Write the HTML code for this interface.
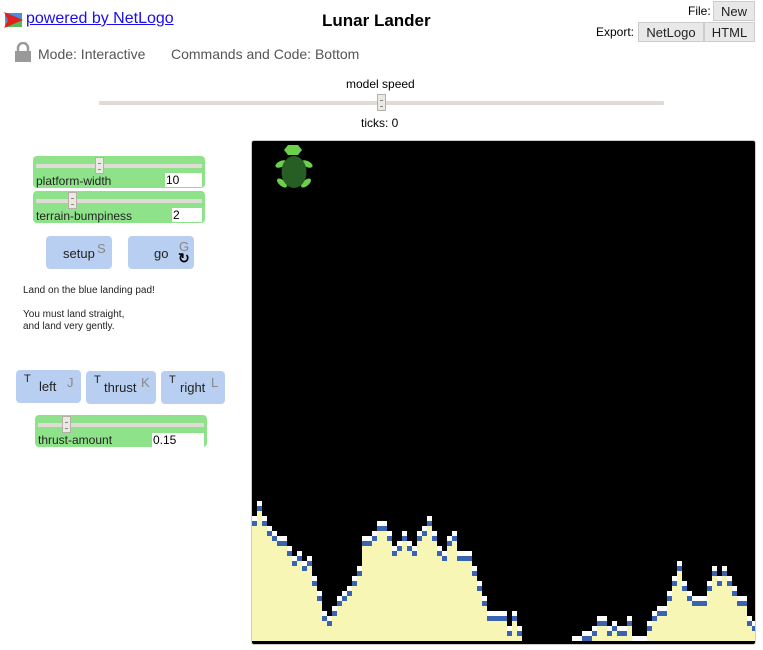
<!DOCTYPE html>
<html><head><meta charset="utf-8"><style>
body{margin:0;width:763px;height:650px;background:#fff;font-family:"Liberation Sans",Arial,sans-serif;position:relative;overflow:hidden}
.a{position:absolute}
.sl{position:absolute;background:#8ee38a;border-radius:4px}
.track{position:absolute;height:4px;background:#e0dcd5}
.thumb{position:absolute;width:9px;height:17px;background:#ece9e4;border:1px solid #b5b0a8;box-sizing:border-box}
.thumb:after{content:"";position:absolute;left:2px;top:5px;width:3px;height:5px;border-top:1px solid #888;border-bottom:1px solid #888}
.lbl{position:absolute;font-size:12px;color:#222}
.val{position:absolute;background:#fff;font-size:12px;color:#000;padding-left:1px;box-sizing:border-box}
.btn{position:absolute;background:#b9cff2;border-radius:4px;font-size:13px;color:#222}
.k{position:absolute;color:#888;font-size:13px}
.tb{position:absolute;background:#e8e8e8;border:1px solid #ccc;font-size:13px;text-align:center;box-sizing:border-box;line-height:19px;color:#222}
</style></head><body>
<svg class="a" style="left:4px;top:12px" width="20" height="16" viewBox="0 0 20 16"><rect x="1" y="1" width="17" height="14" fill="#4a8ee0"/><rect x="1" y="9" width="17" height="6" fill="#5cb85c"/><polygon points="0,0 19,8 0,16 4,8" fill="#e0201c"/></svg>
<div class="a" style="left:26px;top:10px;font-size:16px;color:#1a0dee;text-decoration:underline">powered by NetLogo</div>
<div class="a" style="left:322px;top:11px;font-size:17px;font-weight:bold">Lunar Lander</div>
<div class="a" style="left:688px;top:4px;font-size:12px">File:</div>
<div class="tb" style="left:713px;top:1px;width:42px;height:20px">New</div>
<div class="a" style="left:596px;top:25px;font-size:12px">Export:</div>
<div class="tb" style="left:638px;top:22px;width:66px;height:20px">NetLogo</div>
<div class="tb" style="left:704px;top:22px;width:51px;height:20px">HTML</div>
<svg class="a" style="left:14px;top:42px" width="18" height="20" viewBox="0 0 18 20"><path d="M4 9V6a5 5 0 0 1 10 0v3" fill="none" stroke="#999" stroke-width="2.5"/><rect x="1" y="9" width="16" height="11" fill="#999"/></svg>
<div class="a" style="left:38px;top:46px;font-size:14px;color:#555">Mode: Interactive</div>
<div class="a" style="left:171px;top:46px;font-size:14px;color:#555">Commands and Code: Bottom</div>
<div class="a" style="left:346px;top:77px;font-size:12px">model speed</div>
<div class="track" style="left:99px;top:101px;width:565px"></div>
<div class="thumb" style="left:377px;top:94px"></div>
<div class="a" style="left:361px;top:116px;font-size:12px">ticks: 0</div>

<div class="sl" style="left:33px;top:156px;width:172px;height:32px"></div>
<div class="track" style="left:36px;top:164px;width:166px"></div>
<div class="thumb" style="left:95px;top:157px"></div>
<div class="lbl" style="left:36px;top:174px">platform-width</div>
<div class="val" style="left:165px;top:173px;width:37px;height:14px">10</div>
<div class="sl" style="left:33px;top:191px;width:172px;height:32px"></div>
<div class="track" style="left:36px;top:199px;width:166px"></div>
<div class="thumb" style="left:68px;top:192px"></div>
<div class="lbl" style="left:36px;top:209px">terrain-bumpiness</div>
<div class="val" style="left:172px;top:208px;width:30px;height:14px">2</div>

<div class="btn" style="left:46px;top:236px;width:66px;height:33px"><span class="a" style="left:17px;top:10px">setup</span><span class="k" style="left:51px;top:5px">S</span></div>
<div class="btn" style="left:128px;top:236px;width:66px;height:33px"><span class="a" style="left:26px;top:10px">go</span><span class="k" style="left:51px;top:3px">G</span><span class="a" style="left:50px;top:14px;font-weight:bold;font-size:14px;color:#000">&#8635;</span></div>

<div class="a" style="left:23px;top:285px;font-size:10px;color:#222;line-height:12px">Land on the blue landing pad!<br><br>You must land straight,<br>and land very gently.</div>

<div class="btn" style="left:16px;top:370px;width:65px;height:33px"><span class="a" style="left:8px;top:3px;font-size:11px">T</span><span class="a" style="left:23px;top:9px">left</span><span class="k" style="left:51px;top:5px">J</span></div>
<div class="btn" style="left:86px;top:371px;width:70px;height:33px"><span class="a" style="left:8px;top:3px;font-size:11px">T</span><span class="a" style="left:18px;top:9px">thrust</span><span class="k" style="left:55px;top:4px">K</span></div>
<div class="btn" style="left:161px;top:371px;width:64px;height:33px"><span class="a" style="left:8px;top:3px;font-size:11px">T</span><span class="a" style="left:19px;top:9px">right</span><span class="k" style="left:50px;top:4px">L</span></div>

<div class="sl" style="left:35px;top:415px;width:172px;height:32px"></div>
<div class="track" style="left:38px;top:423px;width:166px"></div>
<div class="thumb" style="left:62px;top:416px"></div>
<div class="lbl" style="left:38px;top:433px">thrust-amount</div>
<div class="val" style="left:152px;top:433px;width:52px;height:14px">0.15</div>

<div class="a" style="left:251px;top:140px;width:503px;height:503px;background:#000;border:1px solid #ccc;border-radius:3px;overflow:hidden">
<svg class="a" style="left:0;top:0" width="503" height="503">
<g fill="#6bd04a"><polygon points="36,4 46,4 50,9 46,14 36,14 32,9"/><ellipse cx="29" cy="23" rx="6" ry="3" transform="rotate(-25 29 23)"/><ellipse cx="55" cy="23" rx="6" ry="3" transform="rotate(25 55 23)"/><ellipse cx="30" cy="42" rx="6" ry="3" transform="rotate(40 30 42)"/><ellipse cx="54" cy="42" rx="6" ry="3" transform="rotate(-40 54 42)"/></g>
<ellipse cx="42" cy="31" rx="12.5" ry="16" fill="#265e23"/>
<g id="t" transform="translate(0,349)"></g>
</svg></div>
<script>
var w=[78,33,78,108,123,138,138,168,198,183,213,198,258,303,363,378,348,318,303,288,258,228,138,138,123,93,93,123,168,153,123,153,168,123,108,78,123,168,183,138,123,183,183,183,228,273,318,363,363,363,363,408,363,408,-1,-1,-1,-1,-1,-1,-1,-1,-1,-1,438,438,423,423,408,378,378,408,393,408,408,378,438,438,438,393,363,348,348,303,258,213,273,303,318,318,318,273,228,258,228,258,288,318,318,378,393];
var s='';
for(var c=0;c<w.length;c++){if(w[c]<0)continue;var y=w[c]/3,x=c*5;
s+='<rect x="'+x+'" y="'+y+'" width="5" height="5" fill="#fff"/>';
if(y+5<151)s+='<rect x="'+x+'" y="'+(y+5)+'" width="5" height="5" fill="#3a63b0"/>';
if(y+10<151)s+='<rect x="'+x+'" y="'+(y+10)+'" width="5" height="'+(151-y-10)+'" fill="#f7f6b4"/>';}
document.getElementById('t').innerHTML=s;
</script>
</body></html>
